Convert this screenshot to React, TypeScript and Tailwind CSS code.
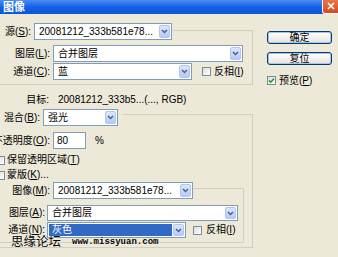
import React from "react";

const FONT = "font-['Liberation_Sans','Noto_Sans_CJK_SC',sans-serif]";

function Key({ k }: { k: string }) {
  return <span className="underline underline-offset-1">{k}</span>;
}

function Label({ name, k, className }: { name: string; k: string; className: string }) {
  return (
    <div className={`flex shrink-0 justify-end whitespace-nowrap ${className}`}>
      {name}(<Key k={k} />):
    </div>
  );
}

function Chevron() {
  return (
    <svg width="7" height="5" viewBox="0 0 7 5">
      <path d="M1 1l2.5 2.5L6 1" fill="none" stroke="#4D6185" strokeWidth="1.5" />
    </svg>
  );
}

function Select({ value, className, selected }: { value: string; className: string; selected?: boolean }) {
  return (
    <div className={`flex shrink-0 border border-[#7F9DB9] bg-white p-px ${className}`}>
      <div
        className={`flex min-w-0 flex-1 items-center overflow-hidden whitespace-nowrap pl-[3px] ${
          selected ? "bg-[#316AC5] text-white" : ""
        }`}
      >
        {value}
      </div>
      <div className="ml-px flex w-[11px] shrink-0 items-center justify-center rounded-[2px] border border-[#B1C5F3] bg-linear-to-b from-[#DCE6FD] to-[#B6CAF7]">
        <Chevron />
      </div>
    </div>
  );
}

function Check({ checked, className = "" }: { checked?: boolean; className?: string }) {
  return (
    <span
      className={`flex h-[9px] w-[9px] shrink-0 items-center justify-center border border-[#7A8AA0] bg-linear-to-br from-[#DEDED8] to-white ${className}`}
    >
      {checked && (
        <svg width="7" height="7" viewBox="0 0 7 7">
          <path d="M1 3.4l1.8 1.8L6 1.6" fill="none" stroke="#21A121" strokeWidth="1.6" />
        </svg>
      )}
    </span>
  );
}

function Button({ children }: { children: React.ReactNode }) {
  return (
    <button
      type="button"
      className="flex h-[13px] w-[65px] items-center justify-center rounded-[3px] border border-[#003C74] bg-linear-to-b from-white to-[#E6E4DA] text-[10px] leading-none shadow-[inset_0_0_0_1px_#A9C2EE]"
    >
      {children}
    </button>
  );
}

export default function App() {
  return (
    <div className={`relative h-[257px] w-[338px] overflow-hidden bg-[#ECE9D8] text-[10px] leading-none text-black ${FONT}`}>
      {/* title bar */}
      <div className="flex h-[14px] items-stretch justify-between bg-linear-to-b from-[#4A8CF6] via-[#1461E6] to-[#0A55D8]">
        <span className="flex items-center pl-[3px] text-[11px] font-bold text-white">图像</span>
        <span className="-mt-px flex w-[16px] items-center justify-center rounded-bl-[3px] border-b border-l border-white bg-linear-to-b from-[#E9774F] to-[#D4491F]">
          <svg width="8" height="8" viewBox="0 0 8 8">
            <path d="M1 1l6 6M7 1L1 7" stroke="white" strokeWidth="1.6" />
          </svg>
        </span>
      </div>

      <div className="flex">
        {/* left column */}
        <div className="w-[253px] shrink-0">
          {/* source */}
          <div className="mt-[16px] border-t border-r border-b border-[#D0CEBF] pb-[4px]">
            <div className="-mt-[8px] flex h-[17px] w-fit items-center bg-[#ECE9D8] pr-px">
              <Label name="源" k="S" className="w-[34px] pr-[3px]" />
              <Select value="20081212_333b581e78..." className="h-[17px] w-[138px]" />
            </div>
            <div className="mt-[5px] flex h-[17px] items-center">
              <Label name="图层" k="L" className="w-[53px] pr-[3px]" />
              <Select value="合并图层" className="h-[17px] w-[190px]" />
            </div>
            <div className="mt-px flex h-[17px] items-center">
              <Label name="通道" k="C" className="w-[53px] pr-[3px]" />
              <Select value="蓝" className="h-[17px] w-[139px]" />
              <Check className="ml-[10px]" />
              <span className="ml-[3px] whitespace-nowrap">
                反相(<Key k="I" />)
              </span>
            </div>
          </div>

          {/* target */}
          <div className="mt-[8px] flex h-[13px] items-center">
            <div className="flex w-[49px] justify-end">目标:</div>
            <span className="ml-[9px] whitespace-nowrap">20081212_333b5...(..., RGB)</span>
          </div>

          {/* blending */}
          <div className="mt-[8px] border-t border-r border-b border-[#D0CEBF] pb-[4px]">
            <div className="-mt-[6px] flex h-[17px] w-fit items-center bg-[#ECE9D8] pr-[5px]">
              <Label name="混合" k="B" className="w-[43px] pr-[3px]" />
              <Select value="强光" className="h-[17px] w-[75px]" />
            </div>
            <div className="mt-[6px] flex h-[17px] items-center">
              <Label name="不透明度" k="O" className="w-[53px] pr-[3px]" />
              <div className="flex h-[17px] w-[33px] items-center border border-[#7F9DB9] bg-white pl-[3px]">80</div>
              <span className="ml-[9px]">%</span>
            </div>
            <div className="mt-[4px] flex h-[14px] items-center">
              <Check className="-ml-[4px]" />
              <span className="ml-[2px] whitespace-nowrap">
                保留透明区域(<Key k="T" />)
              </span>
            </div>
            <div className="mt-px flex h-[14px] items-center">
              <Check className="-ml-[4px]" />
              <span className="ml-[2px] whitespace-nowrap">
                蒙版(<Key k="K" />)...
              </span>
            </div>

            {/* mask */}
            <div className="mt-[6px] w-[244px] border-t border-r border-b border-[#D0CEBF] pb-[4px]">
              <div className="-mt-[7px] flex h-[17px] w-fit items-center bg-[#ECE9D8] pr-px">
                <Label name="图像" k="M" className="w-[53px] pr-[3px]" />
                <Select value="20081212_333b581e78..." className="h-[17px] w-[140px]" />
              </div>
              <div className="mt-[6px] flex h-[16px] items-center">
                <Label name="图层" k="A" className="w-[47px] pr-[2px]" />
                <Select value="合并图层" className="h-[16px] w-[191px]" />
              </div>
              <div className="mt-px flex h-[16px] items-center">
                <Label name="通道" k="N" className="w-[47px] pr-[2px]" />
                <Select value="灰色" className="h-[16px] w-[139px]" selected />
                <Check className="ml-[7px]" />
                <span className="ml-[4px] whitespace-nowrap">
                  反相(<Key k="I" />)
                </span>
              </div>
            </div>
          </div>
        </div>

        {/* right column */}
        <div className="ml-[14px] flex w-[65px] shrink-0 flex-col">
          <div className="mt-[17px]">
            <Button>确定</Button>
          </div>
          <div className="mt-[8px]">
            <Button>复位</Button>
          </div>
          <div className="mt-[9px] flex h-[13px] items-center">
            <Check checked />
            <span className="ml-[3px] whitespace-nowrap">
              预览(<Key k="P" />)
            </span>
          </div>
        </div>
      </div>

      {/* watermark */}
      <div className="absolute left-[11px] top-[235px] flex items-end">
        <span className="text-[12.5px] leading-[14px] [text-shadow:0_0_1px_white]">思缘论坛</span>
        <span className="mb-[2px] ml-[11px] font-['Liberation_Mono',monospace] text-[9px] font-bold [text-shadow:0_0_1px_white]">
          www.missyuan.com
        </span>
      </div>
    </div>
  );
}
